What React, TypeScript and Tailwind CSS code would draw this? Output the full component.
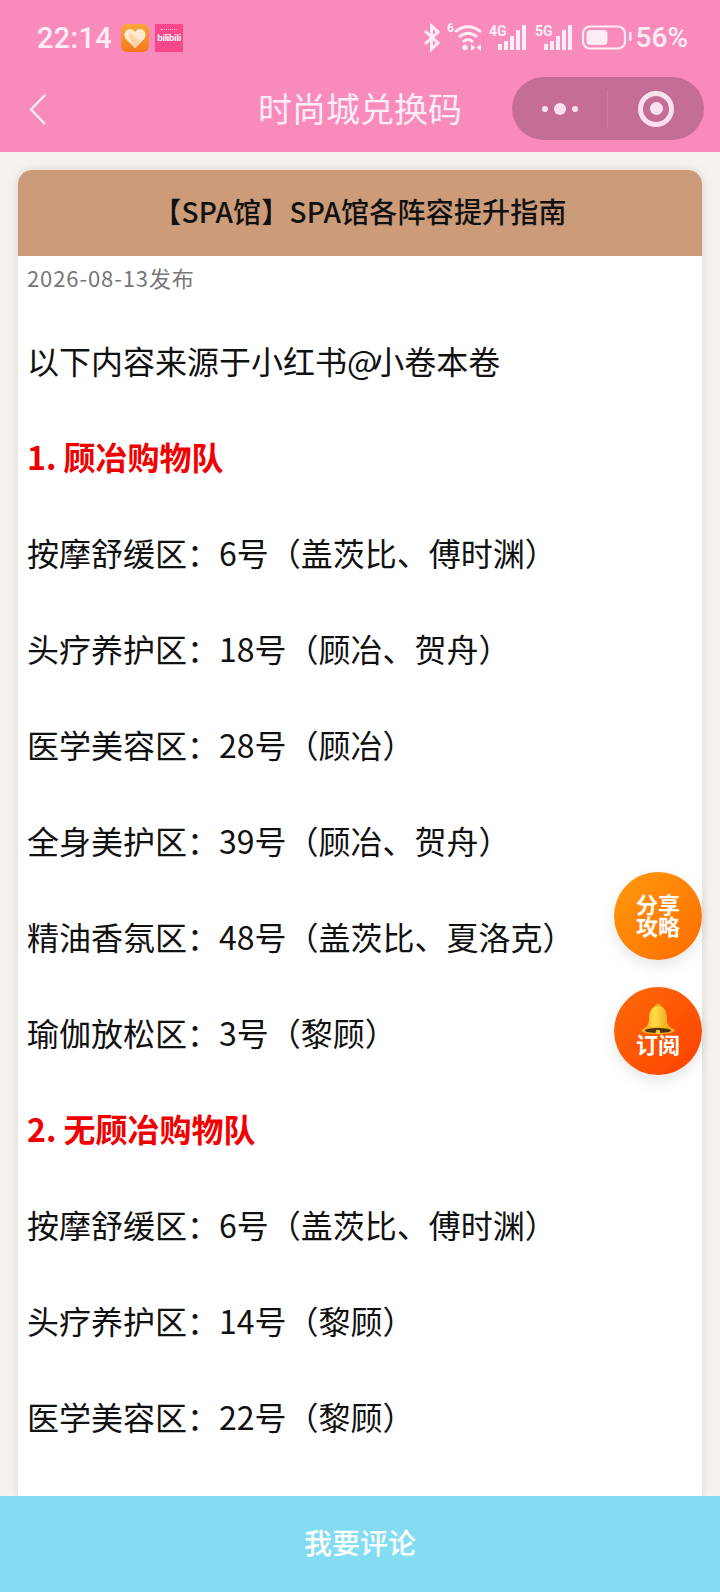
const cjk = "font-['Noto_Sans_CJK_SC','Noto_Sans',sans-serif]";

type Line = { text: string; red?: boolean };

// \uFF1A \uFF08 \uFF09 are the full-width colon and brackets of the original
const lines: Line[] = [
  { text: '1. 顾冶购物队', red: true },
  { text: '按摩舒缓区\uFF1A6号\uFF08盖茨比、傅时渊\uFF09' },
  { text: '头疗养护区\uFF1A18号\uFF08顾冶、贺舟\uFF09' },
  { text: '医学美容区\uFF1A28号\uFF08顾冶\uFF09' },
  { text: '全身美护区\uFF1A39号\uFF08顾冶、贺舟\uFF09' },
  { text: '精油香氛区\uFF1A48号\uFF08盖茨比、夏洛克\uFF09' },
  { text: '瑜伽放松区\uFF1A3号\uFF08黎顾\uFF09' },
  { text: '2. 无顾冶购物队', red: true },
  { text: '按摩舒缓区\uFF1A6号\uFF08盖茨比、傅时渊\uFF09' },
  { text: '头疗养护区\uFF1A14号\uFF08黎顾\uFF09' },
  { text: '医学美容区\uFF1A22号\uFF08黎顾\uFF09' },
];

const HeartIcon = () => (
  <svg width="28" height="28" viewBox="0 0 28 28">
    <defs>
      <linearGradient id="hb" x1="0" y1="0" x2="0" y2="1">
        <stop offset="0" stopColor="#fba63c" />
        <stop offset="1" stopColor="#f5771b" />
      </linearGradient>
    </defs>
    <rect width="28" height="28" rx="6" fill="url(#hb)" />
    <path d="M14 24 L4.500 14.500 C1.500 10 5 4.500 9.500 5 C11.500 5.200 13 6.500 14 8 C15 6.500 16.500 5.200 18.500 5 C23 4.500 26.500 10 23.500 14.500 Z" fill="#fdebd0" />
    <path d="M14 24 L7.500 12 C8 10 10 9.500 11.500 10.500 L20 18 Z" fill="#fbd6a4" />
  </svg>
);

const BiliIcon = () => (
  <div className="relative w-[28px] h-[28px] bg-[#f8488a] flex items-center justify-center overflow-hidden">
    <span className="text-[9px] leading-none font-bold tracking-[-0.3px] text-white font-['Liberation_Sans',sans-serif]">bilibili</span>
    <div className="absolute left-[6px] top-[5px] w-[16px] h-[4px] border-t border-dotted border-white opacity-70" />
  </div>
);

const ink = '#fdeef6';

const bars = (x: number) => (
  <>
    <rect x={x} y="46" width="4" height="6" fill={ink} />
    <rect x={x + 6} y="43" width="4" height="9" fill={ink} />
    <rect x={x + 12} y="38" width="4" height="14" fill={ink} />
    <rect x={x + 18} y="32" width="4" height="20" fill={ink} />
    <rect x={x + 24} y="27" width="4" height="25" fill={ink} />
  </>
);

const StatusIcons = () => (
  <svg width="208" height="32" viewBox="424 24 208 32" fill="none">
    {/* bluetooth */}
    <path d="M425 33 L438 45 L431.500 51 V28 L438 34 L425 46" stroke={ink} strokeWidth="3" />
    {/* wifi */}
    <text x="447" y="34" fontSize="12" fontWeight="700" fill={ink} fontFamily="Roboto, sans-serif">6</text>
    <path d="M455 34 C463 27 473 27 481 34" stroke={ink} strokeWidth="2.800" />
    <path d="M459 39 C465 34 471 34 477 39" stroke={ink} strokeWidth="2.800" />
    <path d="M463 44 C466 41 470 41 473 44" stroke={ink} strokeWidth="2.800" />
    <circle cx="465" cy="49.500" r="2.800" fill={ink} />
    <path d="M471 46 V53 L475.500 49.500 Z M481 46 V53 L476.500 49.500 Z" fill={ink} />
    {/* 4G */}
    <text x="489" y="38" fontSize="14" fontWeight="700" fill={ink} fontFamily="Roboto, sans-serif">4G</text>
    {bars(498)}
    {/* 5G */}
    <text x="535" y="38" fontSize="14" fontWeight="700" fill={ink} fontFamily="Roboto, sans-serif">5G</text>
    {bars(544)}
    {/* battery */}
    <rect x="583" y="28.500" width="42" height="22" rx="7" stroke={ink} strokeWidth="2.200" />
    <rect x="586.500" y="32" width="21" height="15" rx="4" fill={ink} />
    <rect x="629" y="34" width="2.500" height="9" rx="1" fill={ink} />
  </svg>
);

const Bell = () => (
  <svg width="36" height="33" viewBox="0 0 36 33">
    <defs>
      <linearGradient id="bell" x1="0" y1="0" x2="1" y2="0">
        <stop offset="0" stopColor="#f0a818" />
        <stop offset="0.4" stopColor="#ffdc45" />
        <stop offset="1" stopColor="#e4950e" />
      </linearGradient>
    </defs>
    <circle cx="18" cy="4" r="3.500" fill="#e5a315" />
    <path d="M18 3 C10 3 9 11 9 17 C9 22 6 24 2 28 H34 C30 24 27 22 27 17 C27 11 26 3 18 3 Z" fill="url(#bell)" />
    <ellipse cx="18" cy="27.500" rx="16.500" ry="3.800" fill="#f3b21d" />
    <ellipse cx="18" cy="27.500" rx="13" ry="2.500" fill="#4c3110" />
    <circle cx="18" cy="29" r="2.300" fill="#f7c52b" />
  </svg>
);

export default function App() {
  return (
    <div className={`relative w-[720px] h-[1592px] flex flex-col overflow-hidden bg-[#f6f3ef] ${cjk}`}>
      <header className="shrink-0 h-[152px] bg-[#f88bbc] flex flex-col">
        <div className="h-[76px] pl-[37px] pr-[32px] flex items-center justify-between">
          <div className="flex items-center gap-[6px]">
            <span className="text-[29px] leading-none font-medium tracking-[0.3px] text-[#fdeef6] font-['Roboto',sans-serif] mr-[3px]">22:14</span>
            <HeartIcon />
            <BiliIcon />
          </div>
          <div className="flex items-center gap-[4px]">
            <StatusIcons />
            <span className="text-[28px] leading-none font-medium text-[#fdeef6] font-['Roboto',sans-serif]">56%</span>
          </div>
        </div>
        <div className="relative flex-1 flex items-center justify-center">
          <svg className="absolute left-[27px] top-[16px]" width="22" height="34" viewBox="0 0 22 34" fill="none">
            <path d="M18 3 L4 17.500 L18 32" stroke="#fdf0f6" strokeWidth="2.300" />
          </svg>
          <span className="text-[34px] leading-none text-[#fdeef6] mb-[12px]">时尚城兑换码</span>
          <div className="absolute left-[512px] top-[1px] w-[192px] h-[63px] rounded-full bg-[#c46e96] flex items-center">
            <div className="w-[95px] flex items-center justify-center gap-[6px]">
              <div className="w-[6px] h-[6px] rounded-full bg-[#f9e2ed]" />
              <div className="w-[12px] h-[12px] rounded-full bg-[#f9e2ed]" />
              <div className="w-[6px] h-[6px] rounded-full bg-[#f9e2ed]" />
            </div>
            <div className="w-px h-[38px] bg-[#cd7ea3]" />
            <div className="flex-1 flex justify-center">
              <div className="w-[36px] h-[36px] rounded-full border-[5px] border-[#f9e2ed] flex items-center justify-center">
                <div className="w-[13px] h-[13px] rounded-full bg-[#f9e2ed]" />
              </div>
            </div>
          </div>
        </div>
      </header>

      <main className="flex-1 min-h-0 overflow-hidden px-[18px] pt-[18px]">
        <div className="h-full bg-white rounded-t-[14px] shadow-[0_0_10px_rgba(0,0,0,0.12)] overflow-hidden">
          <div className="h-[86px] bg-[#cc9b79] flex items-center justify-center pb-[4px]">
            <h1 className="text-[28px] leading-none font-medium tracking-[0.2px] text-[#111]">【SPA馆】SPA馆各阵容提升指南</h1>
          </div>
          <div className="px-[9px]">
            <p className="text-[22px] leading-[46px] tracking-[0.9px] text-[#777] h-[46px] mt-[-2px]">2026-08-13发布</p>
            <div className="flex flex-col pt-[12px]">
              <p className="text-[32px] leading-[96px] h-[96px] text-[#111]">
                以下内容来源于小红书<span className="tracking-[-5px]">@</span>小卷本卷
              </p>
              {lines.map((l, i) => (
                <p
                  key={i}
                  className={l.red ? 'text-[32px] leading-[96px] h-[96px] font-bold text-[#f00000]' : 'text-[32px] leading-[96px] h-[96px] text-[#111]'}
                >
                  {l.text}
                </p>
              ))}
            </div>
          </div>
        </div>
      </main>

      <footer className="shrink-0 h-[96px] bg-[#83dcf2] flex items-center justify-center z-10 pb-[4px]">
        <span className="text-[28px] leading-none font-medium text-white">我要评论</span>
      </footer>

      <div className="absolute left-[614px] top-[872px] w-[88px] h-[88px] rounded-full bg-gradient-to-br from-[#ff9a0e] to-[#fe6a00] shadow-[0_6px_14px_rgba(0,0,0,0.1)] flex flex-col items-center justify-center pb-[4px]">
        <span className="text-[22px] leading-[22px] font-bold text-white">分享</span>
        <span className="text-[22px] leading-[22px] font-bold text-white">攻略</span>
      </div>
      <div className="absolute left-[614px] top-[987px] w-[88px] h-[88px] rounded-full bg-gradient-to-br from-[#ff6a0a] to-[#fb3f00] shadow-[0_6px_14px_rgba(0,0,0,0.1)] flex flex-col items-center pt-[16px]">
        <Bell />
        <span className="text-[22px] leading-[22px] font-bold text-white mt-[-4px]">订阅</span>
      </div>
    </div>
  );
}
